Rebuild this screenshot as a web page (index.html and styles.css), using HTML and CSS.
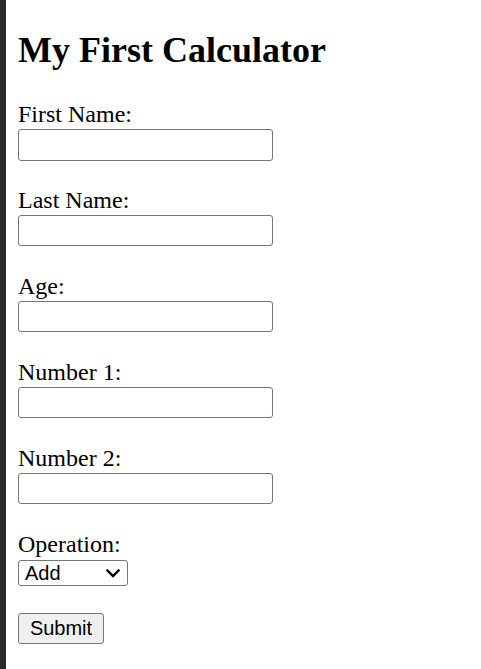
FILE: index.html
```html
<!DOCTYPE html>
<html lang="en">
<head>
<meta charset="utf-8">
<title>My First Calculator</title>
<link rel="stylesheet" href="styles.css">
</head>
<body>
<div class="screen">
  <div class="edge"></div>
  <main class="page">
    <h2 class="title">My First Calculator</h2>
    <form class="calc">
      <div class="field">
        <label class="label" for="first">First Name:</label>
        <input class="text-input" id="first" type="text">
      </div>
      <div class="field">
        <label class="label" for="last">Last Name:</label>
        <input class="text-input" id="last" type="text">
      </div>
      <div class="field">
        <label class="label" for="age">Age:</label>
        <input class="text-input" id="age" type="text">
      </div>
      <div class="field">
        <label class="label" for="n1">Number 1:</label>
        <input class="text-input" id="n1" type="text">
      </div>
      <div class="field">
        <label class="label" for="n2">Number 2:</label>
        <input class="text-input" id="n2" type="text">
      </div>
      <div class="field">
        <label class="label" for="op">Operation:</label>
        <div class="select-wrap">
          <select class="select" id="op">
            <option>Add</option>
            <option>Subtract</option>
            <option>Multiply</option>
            <option>Divide</option>
          </select>
          <svg class="chevron" width="14" height="9" viewBox="0 0 14 9" aria-hidden="true">
            <path d="M1.5 1.5 L7 7 L12.5 1.5" fill="none" stroke="#000" stroke-width="2.4" stroke-linecap="square" stroke-linejoin="miter"/>
          </svg>
        </div>
      </div>
      <div class="actions">
        <button class="submit" type="submit">Submit</button>
      </div>
    </form>
  </main>
</div>
</body>
</html>
```
FILE: styles.css
```css
html, body {
  margin: 0;
  padding: 0;
  background: #ffffff;
}

.screen {
  display: flex;
  min-height: 100vh;
}

.edge {
  width: 6px;
  flex: none;
  background: #2b2b2b;
}

.page {
  flex: 1;
  padding: 0 12px;
  color: #000000;
  font-family: "Liberation Serif", "Times New Roman", serif;
}

.title {
  margin: 30px 0;
  font-size: 36px;
  line-height: 41.4px;
  font-weight: 700;
}

.calc {
  display: flex;
  flex-direction: column;
}

.field {
  display: flex;
  flex-direction: column;
  align-items: flex-start;
  margin-bottom: 26.9px;
}

.label {
  font-size: 24px;
  line-height: 27.6px;
}

.text-input {
  box-sizing: border-box;
  width: 255px;
  height: 31.5px;
  margin: 0;
  padding: 1px 3px;
  border: 1px solid #767676;
  border-radius: 3px;
  background: #ffffff;
  font-family: "Liberation Sans", Arial, sans-serif;
  font-size: 20px;
}

.select-wrap {
  position: relative;
  display: flex;
  margin-top: 1px;
}

.select {
  box-sizing: border-box;
  width: 110px;
  height: 26px;
  margin: 0;
  padding: 0 0 0 6px;
  border: 1px solid #767676;
  border-radius: 3px;
  background: #ffffff;
  color: #000000;
  font-family: "Liberation Sans", Arial, sans-serif;
  font-size: 20px;
  line-height: 24px;
  appearance: none;
  -webkit-appearance: none;
}

.chevron {
  position: absolute;
  left: 88px;
  top: 9px;
  pointer-events: none;
}

.actions {
  display: flex;
}

.submit {
  box-sizing: border-box;
  width: 86px;
  height: 31px;
  margin: 0;
  padding: 1px 9px;
  border: 1px solid #767676;
  border-radius: 3px;
  background: #efefef;
  color: #000000;
  font-family: "Liberation Sans", Arial, sans-serif;
  font-size: 20px;
}
```
